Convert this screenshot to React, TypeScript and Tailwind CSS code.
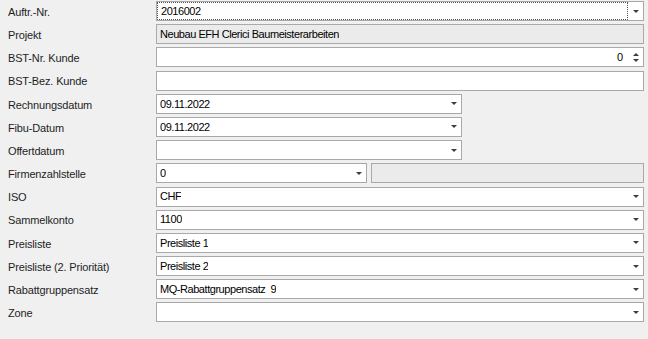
import React from "react";

function Arrow() {
  return (
    <svg width="6" height="3" viewBox="0 0 6 3" className="shrink-0">
      <path d="M0 0h6L3 3z" fill="#3c3c3c" />
    </svg>
  );
}

type FieldProps = {
  value?: string;
  combo?: boolean;
  disabled?: boolean;
  focused?: boolean;
  className?: string;
};

function Field({ value = "", combo, disabled, focused, className = "" }: FieldProps) {
  return (
    <div
      className={`flex h-[20px] items-center border border-[#a9a9a9] ${
        disabled ? "bg-[#ebebeb]" : "bg-white"
      } ${className}`}
    >
      <div
        className={`flex h-full min-w-0 flex-1 items-center px-[3px] ${
          focused ? "border border-dotted border-[#555]" : ""
        }`}
      >
        <span className="truncate whitespace-pre tracking-[-0.45px]">{value}</span>
      </div>
      {combo && (
        <div className="flex h-full w-[15px] items-center justify-center">
          <Arrow />
        </div>
      )}
    </div>
  );
}

function Spin() {
  return (
    <div className="flex h-[20px] items-center border border-[#a9a9a9] bg-white">
      <div className="flex-1 pr-[5px] text-right">0</div>
      <div className="flex w-[15px] flex-col items-center gap-[3px]">
        <svg width="6" height="3" viewBox="0 0 6 3">
          <path d="M0 3h6L3 0z" fill="#3c3c3c" />
        </svg>
        <Arrow />
      </div>
    </div>
  );
}

const rows: { label: string; field: React.ReactNode }[] = [
  { label: "Auftr.-Nr.", field: <Field value="2016002" combo focused /> },
  { label: "Projekt", field: <Field value="Neubau EFH Clerici Baumeisterarbeiten" disabled /> },
  { label: "BST-Nr. Kunde", field: <Spin /> },
  { label: "BST-Bez. Kunde", field: <Field /> },
  { label: "Rechnungsdatum", field: <Field value="09.11.2022" combo className="w-[306px]" /> },
  { label: "Fibu-Datum", field: <Field value="09.11.2022" combo className="w-[306px]" /> },
  { label: "Offertdatum", field: <Field combo className="w-[306px]" /> },
  {
    label: "Firmenzahlstelle",
    field: (
      <div className="flex gap-[4px]">
        <Field value="0" combo className="w-[211px]" />
        <Field disabled className="flex-1" />
      </div>
    ),
  },
  { label: "ISO", field: <Field value="CHF" combo /> },
  { label: "Sammelkonto", field: <Field value="1100" combo /> },
  { label: "Preisliste", field: <Field value="Preisliste 1" combo /> },
  { label: "Preisliste (2. Priorität)", field: <Field value="Preisliste 2" combo /> },
  { label: "Rabattgruppensatz", field: <Field value="MQ-Rabattgruppensatz  9" combo /> },
  { label: "Zone", field: <Field combo /> },
];

export default function App() {
  return (
    <div
      className="h-[339px] w-[648px] overflow-hidden bg-[#f0f0f0] pt-[1px] text-[11px] text-[#1e1e1e]"
      style={{ fontFamily: '"Liberation Sans", Arial, sans-serif' }}
    >
      <div className="flex flex-col gap-[3.2px] pr-[4px]">
        {rows.map((r) => (
          <div key={r.label} className="grid h-[20px] grid-cols-[156px_1fr] items-center">
            <div className="pl-[8px] pt-[2px] whitespace-pre tracking-[-0.15px]">{r.label}</div>
            <div className="text-black">{r.field}</div>
          </div>
        ))}
      </div>
    </div>
  );
}
